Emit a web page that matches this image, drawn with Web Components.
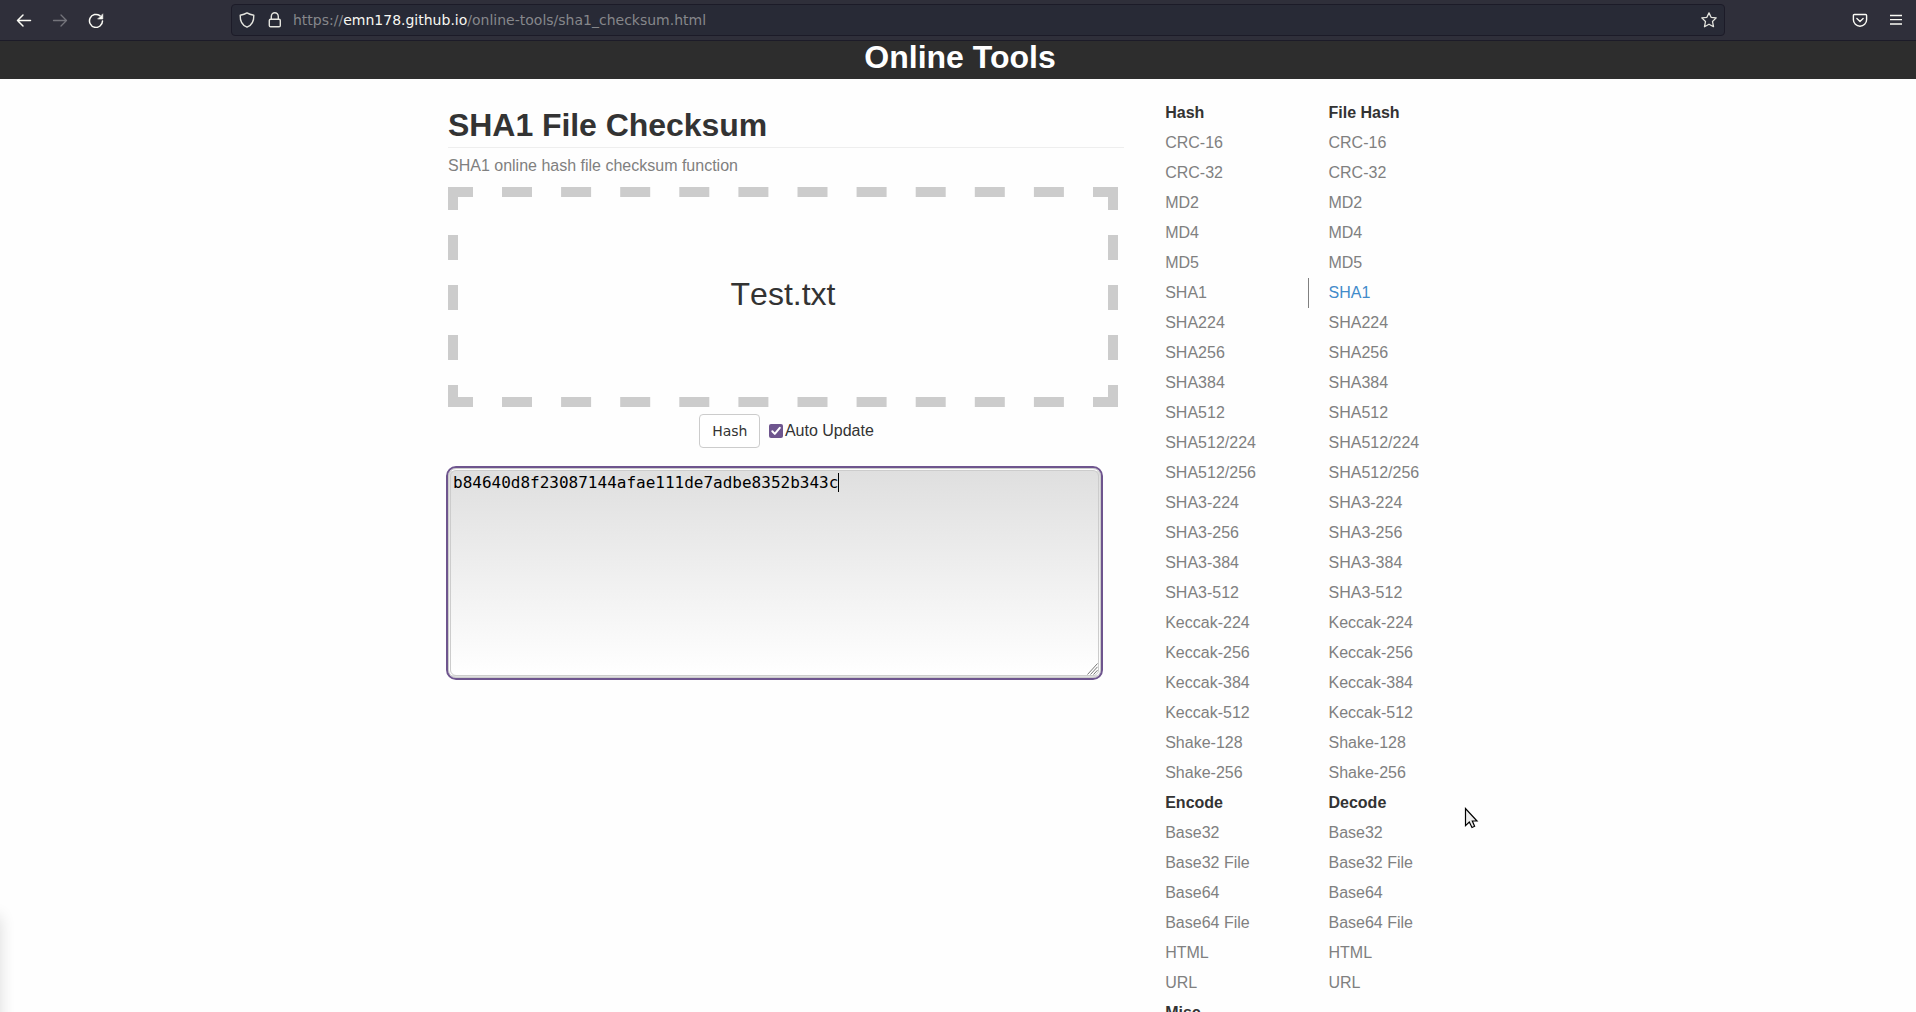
<!DOCTYPE html>
<html lang="en"><head><meta charset="utf-8"><title>SHA1 File Checksum</title>
<style>
html,body{margin:0;height:100%;overflow:hidden;background:#fefefe}
body{font:16px/30px "Liberation Sans",Arial,sans-serif;color:#333}
</style></head><body>
<online-tools-app></online-tools-app>
<script>
const define=(name,html,after)=>{
  const t=document.createElement('template');t.innerHTML=html;
  customElements.define(name,class extends HTMLElement{
    connectedCallback(){
      if(this.shadowRoot)return;
      this.attachShadow({mode:'open'}).append(t.content.cloneNode(true));
      if(after)after.call(this,this.shadowRoot);
    }
  });
};

define('browser-bar',`<style>
:host{display:flex;height:40px;background:#2f2f3a;border-bottom:1px solid #1c1b28;align-items:flex-start;box-sizing:content-box;color:#fbfbf5}
svg{display:block;fill:none;stroke:currentColor;flex:none}
.nav{display:flex;gap:20px;padding:12px 0 0 16px;width:215px}
.dim{color:#74747b}
.url{display:flex;align-items:center;box-sizing:border-box;width:1494px;height:32px;margin-top:4px;border:1px solid #1c1b28;border-radius:4px;background:#282a36;padding:0 7px;color:#e4e4de}
.url svg+svg{margin-left:12px}
.addr{flex:1;margin-left:10px;font:14px/30px "DejaVu Sans",sans-serif;color:#86878b;white-space:pre}
b{font-weight:400;color:#f8f8f2}
.right{display:flex;flex:1;justify-content:flex-end;gap:20px;padding:12px 12px 0 0}
</style>
<div class="nav">
<svg width="16" height="16" viewBox="0 0 16 16" stroke-width="1.5" stroke-linecap="round" stroke-linejoin="round"><path d="M14.500 8.500H1.500M7 3 1.500 8.500 7 14"/></svg>
<svg class="dim" width="16" height="16" viewBox="0 0 16 16" stroke-width="1.300" stroke-linecap="round" stroke-linejoin="round"><path d="M1.500 8.500H14.500M9 3l5.500 5.500L9 14"/></svg>
<svg width="16" height="16" viewBox="0 0 16 16" stroke-width="1.500" stroke-linecap="round"><path d="M14.500 9A6.500 6.500 0 1 1 11.900 3.700"/><path d="M14.800 2.200V7H10Z" fill="currentColor" stroke-width=".6"/></svg>
</div>
<div class="url">
<svg width="16" height="16" viewBox="0 0 16 16" stroke-width="1.400" stroke-linejoin="round"><path d="M8 .9C6 2.200 3.800 2.800 1.200 3.200 1 8.700 3 13.200 8 15.200 13 13.200 15 8.700 14.800 3.200 12.200 2.800 10 2.200 8 .9Z"/></svg>
<svg width="16" height="16" viewBox="0 0 16 16" stroke-width="1.400"><rect x="2.300" y="7.300" width="11" height="7.500" rx="1.300"/><path d="M4.300 7V4.600a3.500 3.900 0 0 1 7 0V7"/></svg>
<span class="addr">https://<b>emn178.github.io</b>/online-tools/sha1_checksum.html</span>
<svg width="16" height="16" viewBox="0 0 16 16" stroke-width="1.300" stroke-linejoin="round"><path d="M8 .9 10.100 5.300 15.200 5.900 11.500 9.500 12.500 14.700 8 12.200 3.500 14.700 4.500 9.500 .8 5.900 5.900 5.300Z"/></svg>
</div>
<div class="right">
<svg width="16" height="16" viewBox="0 0 16 16" stroke-width="1.400" stroke-linecap="round" stroke-linejoin="round"><path d="M2.400 2.500H13.600Q14.600 2.500 14.600 3.500V7.800a6.600 6.400 0 0 1-13.200 0V3.500Q1.400 2.500 2.400 2.500Z"/><path d="M4.900 6.500 8 9.400 11.100 6.500"/></svg>
<svg width="16" height="16" viewBox="0 0 16 16" stroke-width="1.300"><path d="M2 3.500H14M2 7.600H14M2 12H14"/></svg>
</div>`);

define('site-header',`<style>
:host{display:block;height:38px;background:#2d2d2d;color:#fff;text-align:center}
h1{margin:0;padding-left:4px;font-size:32px;line-height:32px}
</style><h1><slot></slot></h1>`);

define('drop-zone',`<style>
:host{display:grid;width:670px;height:220px}
svg,div{grid-area:1/1}
svg{display:block;fill:#ccc}
div{display:grid;place-items:center;font-size:32px;line-height:40px;padding-bottom:6px;font-kerning:none}
</style><svg width="670" height="220"></svg><div><slot></slot></div>`,function(r){
  let d='';
  const rect=(x,y,w,h)=>d+=`M${x} ${y}h${w}v${h}h${-w}z`;
  for(const y of [0,210]){rect(0,y,25,10);rect(645,y,25,10);for(let i=0;i<10;i++)rect(+(54+i*59.1).toFixed(2),y,30,10)}
  for(const x of [0,660]){rect(x,10,10,13);rect(x,198,10,12);for(let i=0;i<3;i++)rect(x,48+i*50,10,25)}
  r.querySelector('svg').innerHTML=`<path d="${d}"/>`;
});

define('hash-controls',`<style>
:host{display:flex;width:670px;justify-content:center;align-items:center;height:34px;padding-left:7px;box-sizing:border-box}
button{font:14px/20px "DejaVu Sans",sans-serif;color:#333;background:#fff;border:1px solid #ccc;border-radius:4px;padding:6px 12px;height:34px;margin:0}
label{display:flex;align-items:center;margin-left:8.500px}
svg{margin-right:2px}
</style><button>Hash</button><label><svg width="14" height="14" viewBox="0 0 14 14"><rect width="14" height="14" rx="2" fill="#6e558e"/><path d="M3.300 7.300 5.800 9.900 10.800 3.800" fill="none" stroke="#fff" stroke-width="2" stroke-linecap="round" stroke-linejoin="round"/></svg><span>Auto Update</span></label>`);

define('hash-output',`<style>
:host{display:flex;box-sizing:border-box;width:653px;height:210px;border:3px double #ccc;border-radius:8px;outline:2px solid #6e558e;background:linear-gradient(#dfdfdf,#fff);padding:2px 0 0 2px;font:16px/19px "DejaVu Sans Mono",monospace;color:#000;align-items:flex-start}
span{border-right:1px solid #000;white-space:pre;height:19px}
svg{margin:auto 0 0 auto;stroke:#777}
</style><span><slot></slot></span><svg width="11" height="12" viewBox="0 0 11 12"><path d="M.5 11.500 10.500 .5M3.500 11.500 10.500 3.800M6.500 11.500 10.500 7.200"/></svg>`);

define('tool-list',`<style>
:host{display:block;width:163.300px;flex:none}
ul{list-style:none;margin:0;padding:0}
li{box-sizing:border-box;height:30px;padding-left:19px;border-left:1px solid transparent;color:#808080;white-space:nowrap}
li.head{font-weight:700;color:#333}
li.on{border-color:#808080;color:#428bca}
</style><ul></ul>`,function(r){
  const ul=r.querySelector('ul');
  for(const s of this.getAttribute('items').split(',')){
    const li=document.createElement('li');li.textContent=s.slice(s[0]==='#'||s[0]==='*'?1:0);
    if(s[0]==='#')li.className='head';if(s[0]==='*')li.className='on';
    ul.append(li);
  }
});

const hashes=on=>`CRC-16,CRC-32,MD2,MD4,MD5,${on?'*':''}SHA1,SHA224,SHA256,SHA384,SHA512,SHA512/224,SHA512/256,SHA3-224,SHA3-256,SHA3-384,SHA3-512,Keccak-224,Keccak-256,Keccak-384,Keccak-512,Shake-128,Shake-256`;
const codes='Base32,Base32 File,Base64,Base64 File,HTML,URL';

define('mouse-pointer',`<style>:host{position:absolute;left:1464px;top:807px}svg{display:block}</style>
<svg width="16" height="24" viewBox="0 0 16 24"><path d="M1.500 1.500V18.600L5.300 15 8 20.500 10.600 19.300 8.300 14H13Z" fill="#eee" stroke="#000" stroke-width="1.200"/></svg>`);

define('side-shadow',`<style>:host{position:absolute;left:-20px;top:916px;width:20px;height:120px;box-shadow:0 0 16px rgba(0,0,0,.14)}</style>`);

define('online-tools-app',`<style>
:host{display:block;height:1012px;overflow:hidden;position:relative}
main{display:flex;padding-left:448px}
.work{width:676px;padding-top:28px;margin-right:21.200px;flex:none}
h2{font-size:32px;line-height:37px;margin:0;padding-bottom:3px;border-bottom:1px solid #eee;letter-spacing:-.06px}
p{margin:3px 0 6px;color:#808080}
hash-controls{margin-top:7px}
hash-output{margin-top:20px}
nav{display:flex;padding-top:19px}
</style>
<browser-bar></browser-bar>
<site-header>Online Tools</site-header>
<main><section class="work"><h2>SHA1 File Checksum</h2>
<p>SHA1 online hash file checksum function</p>
<drop-zone>Test.txt</drop-zone>
<hash-controls></hash-controls>
<hash-output>b84640d8f23087144afae111de7adbe8352b343c</hash-output></section>
<nav><tool-list items="#Hash,${hashes(false)},#Encode,${codes},#Misc"></tool-list><tool-list items="#File Hash,${hashes(true)},#Decode,${codes}"></tool-list></nav></main>
<side-shadow></side-shadow><mouse-pointer></mouse-pointer>`);
</script></body></html>
